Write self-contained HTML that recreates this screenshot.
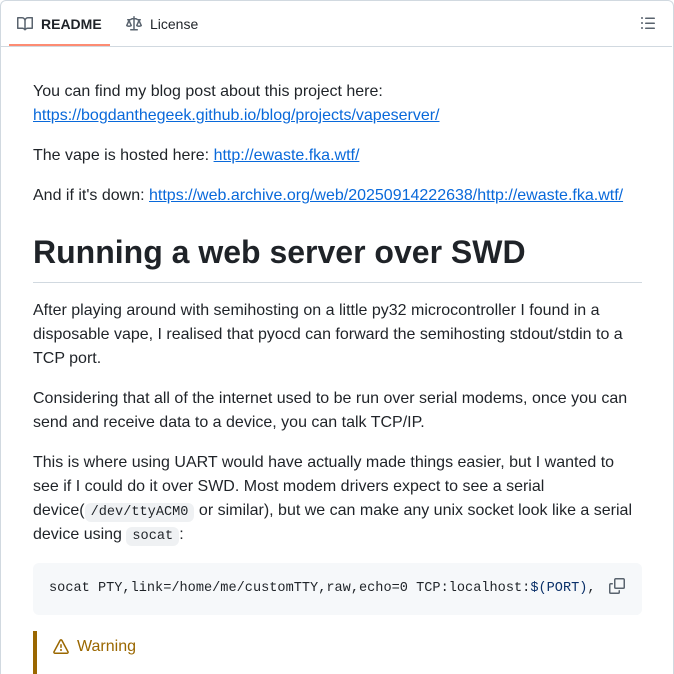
<!DOCTYPE html>
<html><head><meta charset="utf-8"><style>
*{box-sizing:border-box;margin:0;padding:0}
html,body{width:674px;height:674px;overflow:hidden;background:#fff}
body{font-family:"Liberation Sans",sans-serif;color:#1f2328;font-size:16px;line-height:24px;position:relative}
.frame{position:absolute;left:0;top:0;width:674px;height:674px;border:1px solid #d1d9e0;border-bottom:none;border-radius:6px 6px 0 0}
.hdr{position:absolute;left:0;top:0;width:672px;height:47px;border-bottom:1px solid #d1d9e0}
.tab{position:absolute;top:0;height:47px;display:flex;align-items:center;font-size:14px}
.tab svg{margin-right:8px}
.ul{position:absolute;left:9px;top:44px;width:101px;height:2px;background:#fd8c73}
.c{position:absolute;left:33px;top:80px;width:609px}
p{margin-bottom:16px}
a{color:#0969da;text-decoration:underline}
h1{font-size:32px;line-height:40px;font-weight:700;padding-bottom:10px;border-bottom:1px solid #d1d9e0;margin-top:24px;margin-bottom:16px}
code{font-family:"Liberation Mono",monospace;font-size:13.6px;line-height:16px;background:#eff1f3;border-radius:6px;padding:2px 6px}
pre{background:#f6f8fa;border-radius:6px;height:52px;padding:0 16px;font-family:"Liberation Mono",monospace;font-size:13.6px;line-height:52px;white-space:pre;overflow:hidden;position:relative;margin-bottom:16px}
.warn{border-left:4px solid #9a6700;height:60px;padding-left:16px;color:#9a6700;display:flex;align-items:flex-start;padding-top:4px}
</style></head><body>
<div class="frame"></div>
<div class="hdr">
 <div class="tab" style="left:17px;font-weight:700">
  <svg width="16" height="16" viewBox="0 0 16 16" fill="#59636e"><path d="M0 1.75A.75.75 0 0 1 .75 1h4.253c1.227 0 2.317.59 3 1.501A3.743 3.743 0 0 1 11.006 1h4.245a.75.75 0 0 1 .75.75v10.5a.75.75 0 0 1-.75.75h-4.507a2.250 2.250 0 0 0-1.591.659l-.622.621a.75.75 0 0 1-1.060 0l-.622-.621A2.250 2.250 0 0 0 5.258 13H.75a.75.75 0 0 1-.75-.75Zm7.251 10.324.004-5.073-.002-2.253A2.250 2.250 0 0 0 5.003 2.5H1.5v9h3.757a3.750 3.750 0 0 1 1.994.574ZM8.755 4.75l-.004 7.322a3.752 3.752 0 0 1 1.992-.572H14.5v-9h-3.495a2.250 2.250 0 0 0-2.250 2.250Z"/></svg>README</div>
 <div class="tab" style="left:126px;color:#1f2328">
  <svg width="16" height="16" viewBox="0 0 16 16" fill="#59636e"><path d="M8.75.75V2h.985c.304 0 .603.08.867.231l1.29.736c.038.022.08.033.124.033h2.234a.75.75 0 0 1 0 1.5h-.427l2.111 4.692a.75.75 0 0 1-.154.838l-.53-.53.529.531-.001.002-.002.002-.006.006-.006.005-.01.01-.045.04c-.21.176-.441.327-.686.45C14.556 10.78 13.88 11 13 11a4.498 4.498 0 0 1-2.023-.454 3.544 3.544 0 0 1-.686-.45l-.045-.04-.016-.015-.006-.006-.004-.004v-.001a.75.75 0 0 1-.154-.838L12.178 4.5h-.162c-.305 0-.604-.079-.868-.231l-1.29-.736a.245.245 0 0 0-.124-.033H8.75V13h2.5a.75.75 0 0 1 0 1.5h-6.5a.75.75 0 0 1 0-1.5h2.5V3.5h-.984a.245.245 0 0 0-.124.033l-1.289.737c-.265.15-.564.23-.869.23h-.162l2.112 4.692a.75.75 0 0 1-.154.838l-.53-.53.529.531-.001.002-.002.002-.006.006-.016.015-.045.04c-.21.176-.441.327-.686.45C4.556 10.78 3.88 11 3 11a4.498 4.498 0 0 1-2.023-.454 3.544 3.544 0 0 1-.686-.45l-.045-.04-.016-.015-.006-.006-.004-.004v-.001a.75.75 0 0 1-.154-.838L2.178 4.5H1.75a.75.75 0 0 1 0-1.5h2.234a.249.249 0 0 0 .125-.033l1.288-.737c.265-.15.564-.23.869-.23h.984V.75a.75.75 0 0 1 1.5 0Zm2.945 8.477c.285.135.718.273 1.305.273s1.02-.138 1.305-.273L13 6.327Zm-10 0c.285.135.718.273 1.305.273s1.02-.138 1.305-.273L3 6.327Z"/></svg>License</div>
 <svg style="position:absolute;left:640px;top:15px" width="16" height="16" viewBox="0 0 16 16" fill="#59636e"><path d="M5.75 2.5h8.5a.75.75 0 0 1 0 1.5h-8.5a.75.75 0 0 1 0-1.5Zm0 5h8.5a.75.75 0 0 1 0 1.5h-8.5a.75.75 0 0 1 0-1.5Zm0 5h8.5a.75.75 0 0 1 0 1.5h-8.5a.75.75 0 0 1 0-1.5ZM2 14a1 1 0 1 1 0-2 1 1 0 0 1 0 2Zm1-6a1 1 0 1 1-2 0 1 1 0 0 1 2 0ZM2 4a1 1 0 1 1 0-2 1 1 0 0 1 0 2Z"/></svg>
 <div class="ul"></div>
</div>
<div class="c">
<p>You can find my blog post about this project here:<br><a>https://bogdanthegeek.github.io/blog/projects/vapeserver/</a></p>
<p>The vape is hosted here: <a>http://ewaste.fka.wtf/</a></p>
<p>And if it's down: <a>https://web.archive.org/web/20250914222638/http://ewaste.fka.wtf/</a></p>
<h1>Running a web server over SWD</h1>
<p>After playing around with semihosting on a little py32 microcontroller I found in a disposable vape, I realised that pyocd can forward the semihosting stdout/stdin to a TCP port.</p>
<p>Considering that all of the internet used to be run over serial modems, once you can send and receive data to a device, you can talk TCP/IP.</p>
<p>This is where using UART would have actually made things easier, but I wanted to see if I could do it over SWD. Most modem drivers expect to see a serial device(<code>/dev/ttyACM0</code> or similar), but we can make any unix socket look like a serial device using <code>socat</code>:</p>
<pre>socat PTY,link=/home/me/customTTY,raw,echo=0 TCP:localhost:<span style="color:#0a3069">$(PORT)</span>,r<span style="position:absolute;left:563px;top:0;width:60px;height:52px;background:#f6f8fa"></span><svg style="position:absolute;left:576px;top:15px" width="16" height="16" viewBox="0 0 16 16" fill="#59636e"><path d="M0 6.75C0 5.784.784 5 1.75 5h1.5a.75.75 0 0 1 0 1.5h-1.5a.25.25 0 0 0-.25.25v7.5c0 .138.112.25.25.25h7.5a.25.25 0 0 0 .25-.25v-1.5a.75.75 0 0 1 1.5 0v1.5A1.75 1.75 0 0 1 9.25 16h-7.5A1.75 1.75 0 0 1 0 14.25Z"/><path d="M5 1.75C5 .784 5.784 0 6.75 0h7.5C15.216 0 16 .784 16 1.75v7.5A1.75 1.75 0 0 1 14.25 11h-7.5A1.75 1.75 0 0 1 5 9.25Zm1.75-.25a.25.25 0 0 0-.25.25v7.5c0 .138.112.25.25.25h7.5a.25.25 0 0 0 .25-.25v-7.5a.25.25 0 0 0-.25-.25Z"/></svg></pre>
<div class="warn"><svg style="margin:4px 8px 0 0" width="16" height="16" viewBox="0 0 16 16" fill="#9a6700"><path d="M6.457 1.047c.659-1.234 2.427-1.234 3.086 0l6.082 11.378A1.75 1.75 0 0 1 14.082 15H1.918a1.75 1.75 0 0 1-1.543-2.575Zm1.763.707a.25.25 0 0 0-.44 0L1.698 13.132a.25.25 0 0 0 .22.368h12.164a.25.25 0 0 0 .22-.368Zm.53 3.996v2.5a.75.75 0 0 1-1.5 0v-2.5a.75.75 0 0 1 1.5 0ZM9 11a1 1 0 1 1-2 0 1 1 0 0 1 2 0Z"/></svg>Warning</div>
</div>
</body></html>
